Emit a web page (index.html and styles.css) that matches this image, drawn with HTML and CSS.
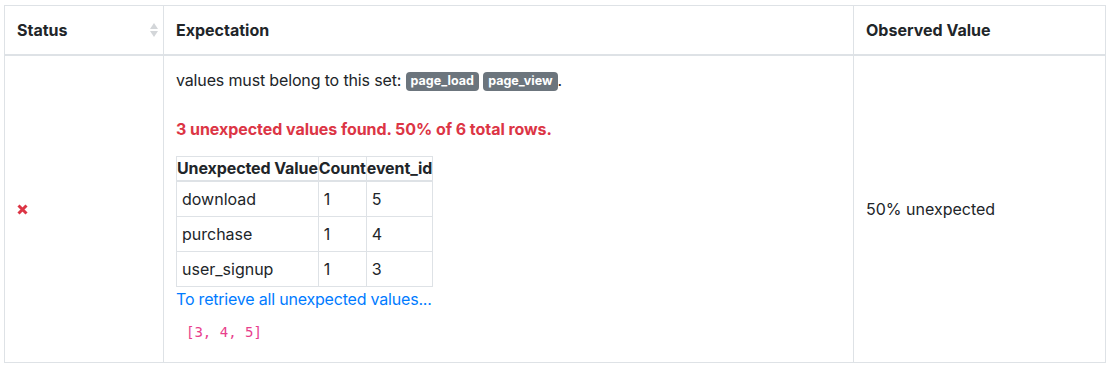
FILE: index.html
```html
<!DOCTYPE html>
<html>
<head>
<meta charset="utf-8">
<link rel="stylesheet" href="styles.css">
</head>
<body>
<div class="wrap">
<table class="results">
  <thead>
    <tr>
      <th class="col-status"><div class="th-sort"><span>Status</span>
        <svg class="sort" width="8" height="14" viewBox="0 0 8 14"><path d="M4 0 L8 6 L0 6 Z" fill="#d3d6d9"/><path d="M4 14 L8 8 L0 8 Z" fill="#d3d6d9"/></svg></div></th>
      <th class="col-exp">Expectation</th>
      <th class="col-obs">Observed Value</th>
    </tr>
  </thead>
  <tbody>
    <tr>
      <td class="mid">
        <svg class="fail" width="11" height="11" viewBox="0 0 11 11"><path d="M1.5 1.5 L9.5 9.5 M9.5 1.5 L1.5 9.5" stroke="#dc3545" stroke-width="3" stroke-linecap="butt"/></svg>
      </td>
      <td>
        <div class="line">values must belong to this set: <span class="badge">page_load</span> <span class="badge">page_view</span>.</div>
        <p class="err">3 unexpected values found. 50% of 6 total rows.</p>
        <table class="mini">
          <thead>
            <tr><th>Unexpected Value</th><th>Count</th><th>event_id</th></tr>
          </thead>
          <tbody>
            <tr><td>download</td><td>1</td><td>5</td></tr>
            <tr><td>purchase</td><td>1</td><td>4</td></tr>
            <tr><td>user_signup</td><td>1</td><td>3</td></tr>
          </tbody>
        </table>
        <a class="more" href="#">To retrieve all unexpected values...</a>
        <div class="codebox"><code>[3, 4, 5]</code></div>
      </td>
      <td class="mid">50% unexpected</td>
    </tr>
  </tbody>
</table>
</div>
</body>
</html>
```

FILE: styles.css
```css
* { box-sizing: border-box; }
html, body { margin: 0; padding: 0; background: #fff; }
body {
  font-family: Inter, "Liberation Sans", sans-serif;
  font-size: 16px;
  line-height: 1.5;
  color: #212529;
}
.wrap { padding: 5px 8px 0 4px; }
.results {
  width: 1102px;
  border-collapse: collapse;
  border: 1px solid #dee2e6;
}
.results > thead > tr > th,
.results > tbody > tr > td {
  border: 1px solid #dee2e6;
  padding: 12px;
  text-align: left;
  vertical-align: top;
}
.results > thead > tr > th {
  border-bottom: 2px solid #dee2e6;
  font-weight: 700;
  vertical-align: bottom;
}
.col-status { width: 159px; }
.col-obs { width: 252px; }
.th-sort { display: flex; justify-content: space-between; align-items: center; }
.sort { display: block; margin-right: -7px; }
.results > tbody > tr > td.mid { vertical-align: middle; }
.fail { display: block; }
.line { margin-bottom: 0; letter-spacing: -0.15px; }
.badge {
  display: inline-block;
  font-size: 12.5px;
  font-weight: 700;
  line-height: 1;
  color: #fff;
  background: #6c757d;
  padding: 3px 5px 3px;
  border-radius: 4px;
  vertical-align: 1px;
  letter-spacing: 0;
}
.err {
  color: #dc3545;
  font-weight: 700;
  margin: 25px 0 15px;
  letter-spacing: -0.05px;
}
.mini {
  border-collapse: collapse;
  border: 1px solid #dee2e6;
}
.mini th {
  padding: 0;
  font-weight: 700;
  text-align: left;
  line-height: 23px;
  letter-spacing: -0.1px;
  border: 1px solid #dee2e6;
  border-bottom: 2px solid #dee2e6;
}
.mini td {
  padding: 5px 5px;
  border: 1px solid #dee2e6;
}
.more {
  display: block;
  color: #007bff;
  text-decoration: none;
  letter-spacing: -0.2px;
}
.codebox {
  padding: 10px 10px 7px;
  font-size: 14px;
  line-height: 21px;
}
code {
  font-family: "DejaVu Sans Mono", "Liberation Mono", monospace;
  font-size: 14px;
  color: #e83e8c;
}
```
